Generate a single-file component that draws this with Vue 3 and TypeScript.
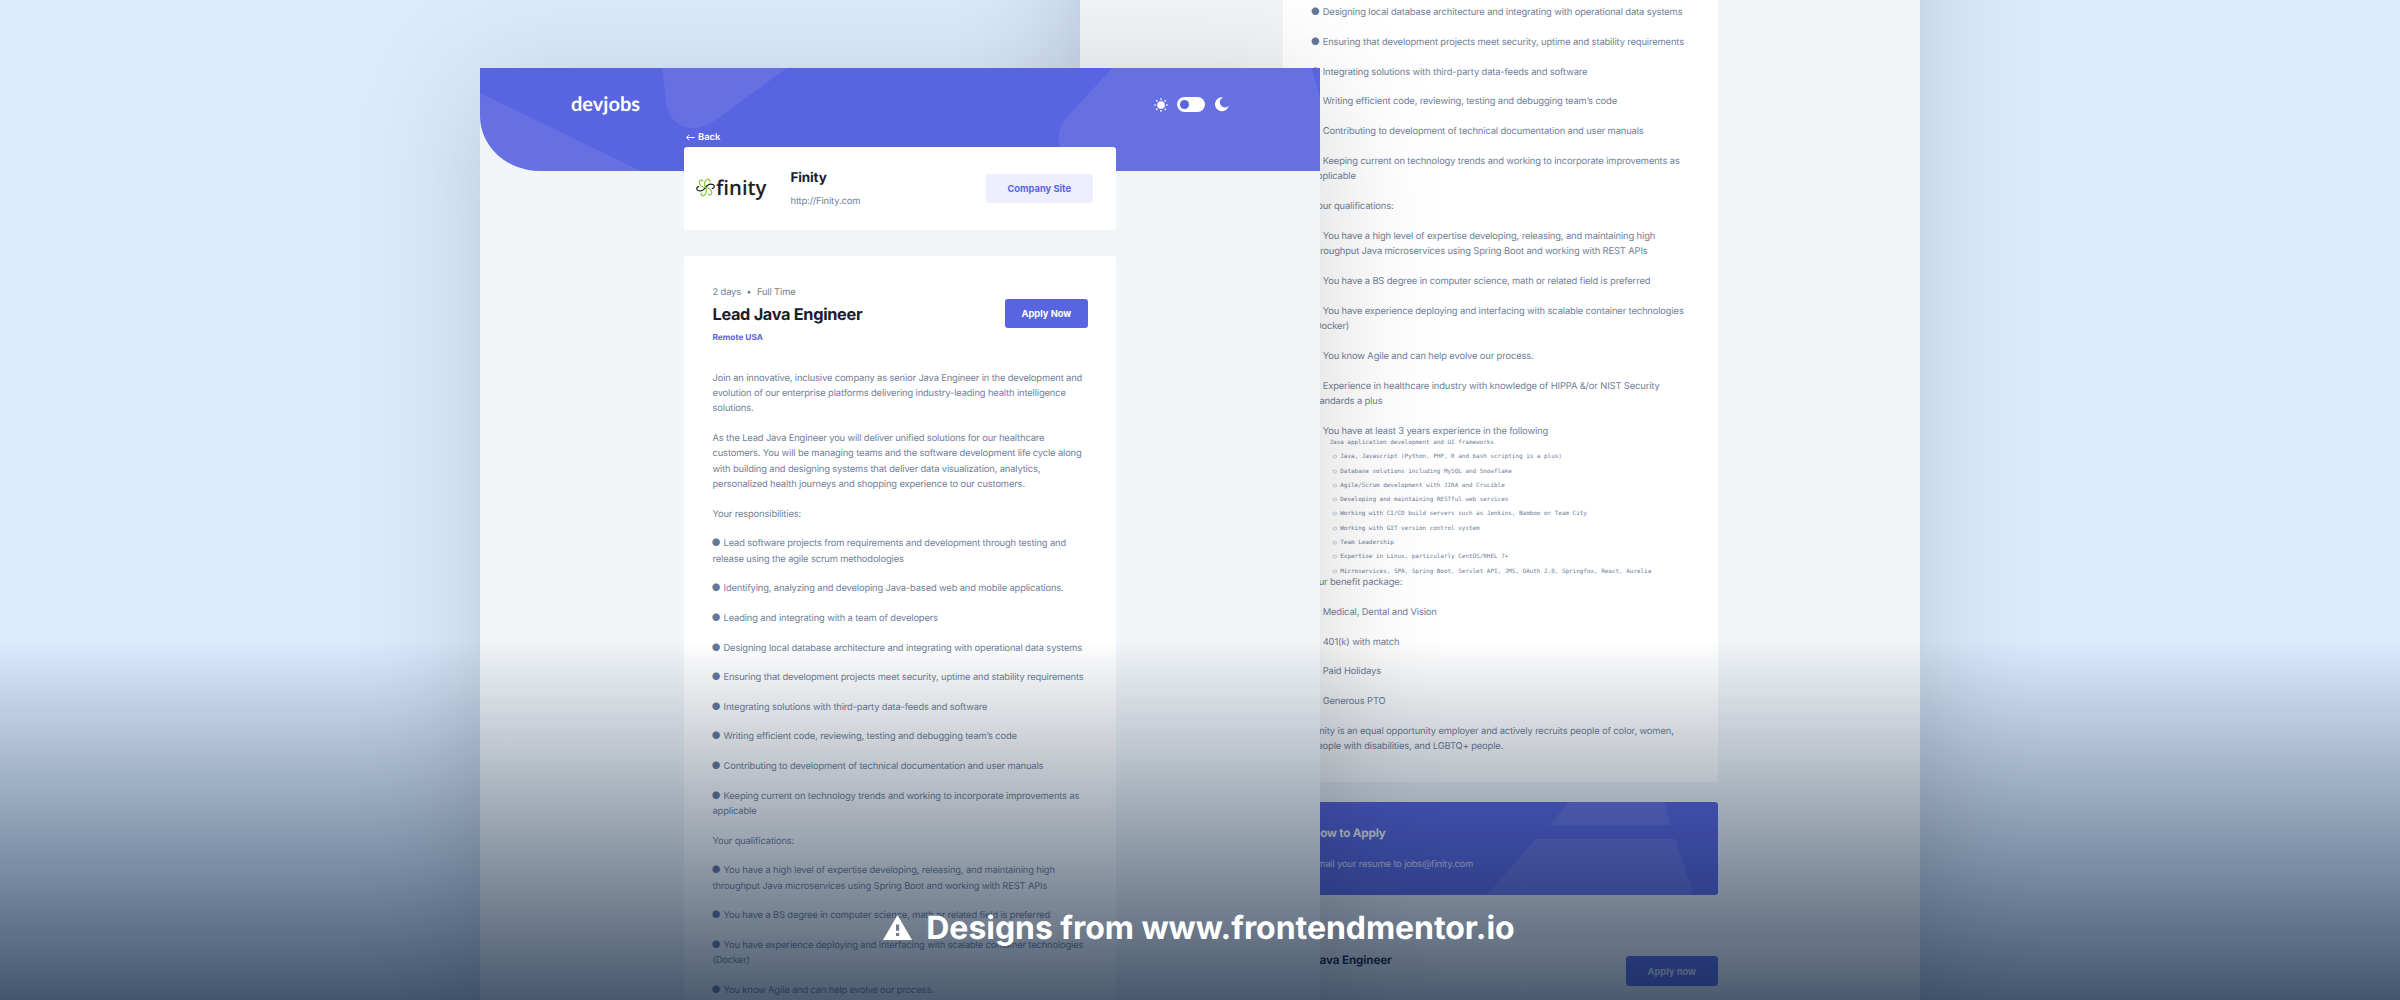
<script setup lang="ts">
interface Para {
  bullet?: boolean
  lines: string[]
}

const intro: Para[] = [
  {
    lines: [
      'Join an innovative, inclusive company as senior Java Engineer in the development and',
      'evolution of our enterprise platforms delivering industry-leading health intelligence',
      'solutions.',
    ],
  },
  {
    lines: [
      'As the Lead Java Engineer you will deliver unified solutions for our healthcare',
      'customers. You will be managing teams and the software development life cycle along',
      'with building and designing systems that deliver data visualization, analytics,',
      'personalized health journeys and shopping experience to our customers.',
    ],
  },
  { lines: ['Your responsibilities:'] },
  {
    bullet: true,
    lines: [
      'Lead software projects from requirements and development through testing and',
      'release using the agile scrum methodologies',
    ],
  },
  { bullet: true, lines: ['Identifying, analyzing and developing Java-based web and mobile applications.'] },
  { bullet: true, lines: ['Leading and integrating with a team of developers'] },
]

const shared: Para[] = [
  { bullet: true, lines: ['Designing local database architecture and integrating with operational data systems'] },
  { bullet: true, lines: ['Ensuring that development projects meet security, uptime and stability requirements'] },
  { bullet: true, lines: ['Integrating solutions with third-party data-feeds and software'] },
  { bullet: true, lines: ['Writing efficient code, reviewing, testing and debugging team’s code'] },
  { bullet: true, lines: ['Contributing to development of technical documentation and user manuals'] },
  {
    bullet: true,
    lines: ['Keeping current on technology trends and working to incorporate improvements as', 'applicable'],
  },
  { lines: ['Your qualifications:'] },
  {
    bullet: true,
    lines: [
      'You have a high level of expertise developing, releasing, and maintaining high',
      'throughput Java microservices using Spring Boot and working with REST APIs',
    ],
  },
  { bullet: true, lines: ['You have a BS degree in computer science, math or related field is preferred'] },
  {
    bullet: true,
    lines: ['You have experience deploying and interfacing with scalable container technologies', '(Docker)'],
  },
  { bullet: true, lines: ['You know Agile and can help evolve our process.'] },
]

const frontParas: Para[] = [...intro, ...shared]

const backParas: Para[] = [
  ...shared,
  {
    bullet: true,
    lines: ['Experience in healthcare industry with knowledge of HIPPA &/or NIST Security', 'standards a plus'],
  },
  { bullet: true, lines: ['You have at least 3 years experience in the following'] },
]

const skills: string[] = [
  'Java, Javascript (Python, PHP, R and bash scripting is a plus)',
  'Database solutions including MySQL and Snowflake',
  'Agile/Scrum development with JIRA and Crucible',
  'Developing and maintaining RESTful web services',
  'Working with CI/CD build servers such as Jenkins, Bamboo or Team City',
  'Working with GIT version control system',
  'Team Leadership',
  'Expertise in Linux, particularly CentOS/RHEL 7+',
  'Microservices, SPA, Spring Boot, Servlet API, JMS, OAuth 2.0, Springfox, React, Aurelia',
]

const benefits: Para[] = [
  { lines: ['Our benefit package:'] },
  { bullet: true, lines: ['Medical, Dental and Vision'] },
  { bullet: true, lines: ['401(k) with match'] },
  { bullet: true, lines: ['Paid Holidays'] },
  { bullet: true, lines: ['Generous PTO'] },
  {
    lines: [
      'Finity is an equal opportunity employer and actively recruits people of color, women,',
      'people with disabilities, and LGBTQ+ people.',
    ],
  },
]

const petals = [0, 60, 120, 180, 240, 300]
const rays = [0, 45, 90, 135, 180, 225, 270, 315]
</script>

<template>
  <main class="stage">
    <section class="window back">
      <article class="sheet">
        <div v-for="(p, i) in backParas" :key="i" class="para">
          <div v-for="(l, j) in p.lines" :key="j" class="line">
            <span v-if="p.bullet && j === 0" class="dot">●</span>{{ l }}
          </div>
        </div>
        <div class="code">
          <div class="code-head">Java application development and UI frameworks</div>
          <div v-for="s in skills" :key="s" class="code-row"><span class="ring">○</span>{{ s }}</div>
        </div>
        <div v-for="(p, i) in benefits" :key="'b' + i" class="para">
          <div v-for="(l, j) in p.lines" :key="j" class="line">
            <span v-if="p.bullet && j === 0" class="dot">●</span>{{ l }}
          </div>
        </div>
      </article>
      <div class="how">
        <svg class="how-art" viewBox="0 0 434 93" preserveAspectRatio="none">
          <path d="M286 0h95l6 23H266z M252 37h140l18 56H204z" fill="#fff" fill-opacity=".09" />
        </svg>
        <h3>How to Apply</h3>
        <p>Email your resume to jobs@finity.com</p>
      </div>
      <footer class="foot">
        <div class="foot-title">Lead Java Engineer</div>
        <button class="btn foot-btn">Apply now</button>
      </footer>
    </section>

    <section class="window front">
      <header class="head">
        <svg class="head-art" viewBox="0 0 840 103" preserveAspectRatio="none">
          <path
            d="M0 25L161 103H0z M182.5 0C184 14 185 25 186.500 38C190 55 205 63.500 222 59C229 57 234 53 240 49L307 0z M632 0H831.500L840 29V103H592C584 92 577 82 579 66C580 58 583 54 588 48z"
            fill="#fff"
            fill-opacity=".08"
          />
        </svg>
        <div class="logo">devjobs</div>
        <div class="theme">
          <svg class="sun" viewBox="-7 -7 14 14">
            <circle r="3.800" fill="#fff" />
            <path
              v-for="r in rays"
              :key="r"
              d="M0 -5.300V-6.600"
              :transform="`rotate(${r})`"
              stroke="#fff"
              stroke-width="1.100"
              stroke-linecap="round"
            />
          </svg>
          <div class="toggle"><i></i></div>
          <svg class="moon" viewBox="0 0 14.500 14.500">
            <path d="M8.400.35A5.200 5.200 0 1 0 13.800 8.850A7 7 0 1 1 8.400.35z" fill="#fff" />
          </svg>
        </div>
      </header>
      <div class="page">
        <div class="backlink">
          <svg viewBox="0 0 9 7">
            <path d="M8.700 3.500H.7M3.300.8L.6 3.500L3.300 6.200" fill="none" stroke="#fff" stroke-width="1" />
          </svg>
          <span>Back</span>
        </div>
        <div class="company">
          <div class="brand">
            <svg viewBox="-10 -11 20 22">
              <path
                v-for="(a, i) in petals"
                :key="a"
                d="M0 0C-2 -3 -2.500 -6 .5 -8.800C2.500 -9.800 4.300 -8 3.600 -6.500"
                :transform="`rotate(${a + 8})`"
                fill="none"
                :stroke="i === 1 || i === 4 ? '#231f20' : '#8cc63f'"
                stroke-width="1.300"
                stroke-linecap="round"
              />
            </svg>
            <span>finity</span>
          </div>
          <div class="who">
            <strong>Finity</strong>
            <span>http://Finity.com</span>
          </div>
          <button class="btn site">Company Site</button>
        </div>
        <article class="sheet job">
          <div class="job-head">
            <div>
              <div class="meta"><span>2 days</span><b>•</b><span>Full Time</span></div>
              <h1>Lead Java Engineer</h1>
              <div class="place">Remote USA</div>
            </div>
            <button class="btn apply">Apply Now</button>
          </div>
          <div v-for="(p, i) in frontParas" :key="i" class="para">
            <div v-for="(l, j) in p.lines" :key="j" class="line">
              <span v-if="p.bullet && j === 0" class="dot">●</span>{{ l }}
            </div>
          </div>
        </article>
      </div>
    </section>

    <div class="shade">
      <div class="caption">
        <svg viewBox="0 0 29 25">
          <path
            fill-rule="evenodd"
            d="M14.500 0L29 25H0z M13 9.500v6.300h3.200V9.500z M13 18v3h3.200v-3z"
            fill="#fff"
          />
        </svg>
        <span>Designs from www.frontendmentor.io</span>
      </div>
    </div>
  </main>
</template>

<style>
body {
  background: #dbebfe;
}
</style>

<style scoped>
.stage,
.stage * {
  box-sizing: border-box;
}
.stage {
  position: relative;
  width: 2400px;
  height: 1000px;
  overflow: hidden;
  background: #dbebfe;
  font-family: Inter, 'Liberation Sans', sans-serif;
  color: #6e8098;
  text-rendering: geometricPrecision;
}
h1,
h3,
p {
  margin: 0;
}
.window {
  position: absolute;
  width: 840px;
  background: #f1f5f8;
  box-shadow: 0 20px 115px rgba(0, 0, 0, 0.17);
}
.back {
  left: 1080px;
  top: -200px;
  height: 1400px;
  padding: 200px 202.5px 0 203px;
}
.front {
  left: 480px;
  top: 68px;
  height: 1100px;
}
.sheet {
  background: #fff;
  border-radius: 3px;
  font-size: 9.33px;
  line-height: 15.4px;
  letter-spacing: -0.13px;
}
.back .sheet {
  height: 982.3px;
  margin-top: -200px;
  padding: 205.200px 0 0 28.700px;
  font-size: 9.37px;
  line-height: 15.45px;
}
.para {
  margin-bottom: 14.2px;
}
.back .para {
  margin-bottom: 14.320px;
}
.line {
  white-space: nowrap;
}
.dot {
  display: inline-block;
  width: 12px;
  margin-left: -1px;
  font-size: 10px;
  line-height: 0;
  letter-spacing: 0;
  color: #64789a;
}
.code {
  margin-top: -17.900px;
  padding-left: 17.800px;
  font: 5.950px/14.280px 'DejaVu Sans Mono', monospace;
  letter-spacing: 0;
  white-space: nowrap;
  margin-bottom: -3.700px;
}
.code-row {
  padding-left: 3.600px;
}
.ring {
  display: inline-block;
  width: 7.200px;
}
.how {
  position: relative;
  height: 93px;
  margin-top: 20px;
  padding: 23px 28.700px 0;
  border-radius: 3px;
  overflow: hidden;
  background: #5964e0;
  color: #fff;
}
.how-art {
  position: absolute;
  inset: 0;
  width: 100%;
  height: 100%;
}
.how h3 {
  font-size: 11.700px;
  line-height: 16px;
  letter-spacing: -0.200px;
}
.how p {
  margin-top: 16px;
  font-size: 9.370px;
  line-height: 16px;
  letter-spacing: -0.140px;
  opacity: 0.8;
}
.foot {
  display: flex;
  justify-content: space-between;
  margin: 43.700px -202.500px 0 -203px;
  padding: 17.500px 202.500px 0 203px;
  height: 300px;
  background: #fbfcfd;
}
.foot-title {
  color: #19202d;
  font-weight: 700;
  font-size: 11.700px;
  line-height: 16px;
  letter-spacing: -0.150px;
  margin-top: -4px;
}
.btn {
  height: 29.300px;
  padding: 0;
  border: 0;
  border-radius: 3px;
  background: #5964e0;
  color: #fff;
  font: 700 9.330px Inter, sans-serif;
}
.foot-btn {
  width: 91.500px;
  color: #e6e8fb;
}
.head {
  position: relative;
  display: flex;
  justify-content: space-between;
  align-items: flex-start;
  height: 103px;
  padding: 24px 91px 0 91px;
  background: #5964e0;
  border-bottom-left-radius: 60px 55px;
  overflow: hidden;
}
.head-art {
  position: absolute;
  inset: 0;
  width: 100%;
  height: 100%;
}
.logo {
  position: relative;
  font: 700 20px/24px Lato, sans-serif;
  color: #fff;
}
.theme {
  position: relative;
  display: flex;
  align-items: center;
  gap: 9.500px;
  margin-top: 5px;
}
.sun {
  width: 14px;
  height: 14px;
}
.moon {
  width: 14.500px;
  height: 14.500px;
}
.toggle {
  width: 28px;
  height: 15px;
  border-radius: 8px;
  background: #fff;
  padding: 3px;
}
.toggle i {
  display: block;
  width: 9px;
  height: 9px;
  border-radius: 50%;
  background: #5964e0;
}
.page {
  position: relative;
  width: 432.400px;
  margin: -42px 0 0 204px;
}
.backlink {
  display: flex;
  align-items: center;
  gap: 3.500px;
  height: 16px;
  padding-left: 1.500px;
  color: #fff;
  font-size: 9.330px;
  font-weight: 600;
}
.backlink svg {
  width: 9px;
  height: 7px;
}
.company {
  display: flex;
  align-items: flex-start;
  height: 83px;
  margin-top: 2px;
  background: #fff;
  border-radius: 3px;
}
.brand {
  display: flex;
  align-items: center;
  width: 106.500px;
  padding: 28px 0 0 12px;
  color: #231f20;
  font: 600 20.300px/24px 'Open Sans', sans-serif;
}
.brand svg {
  width: 19px;
  height: 21px;
  margin-right: 1px;
}
.who {
  display: flex;
  flex-direction: column;
  padding-top: 23px;
  font-size: 9.330px;
  line-height: 16px;
  letter-spacing: -0.130px;
}
.who strong {
  margin-bottom: 8px;
  color: #19202d;
  font-size: 13.500px;
}
.site {
  width: 107px;
  margin: 27px 23.700px 0 auto;
  background: #eeeffc;
  color: #5964e0;
}
.job {
  height: 900px;
  margin-top: 26px;
  padding: 28px 28.500px 0;
}
.job-head {
  display: flex;
  justify-content: space-between;
  height: 86.600px;
}
.meta {
  display: flex;
  gap: 5.800px;
  line-height: 18px;
}
.job h1 {
  margin-top: 1px;
  color: #19202d;
  font-size: 16.300px;
  line-height: 22px;
  letter-spacing: -0.300px;
}
.place {
  margin-top: 6px;
  color: #5964e0;
  font-size: 8.300px;
  font-weight: 700;
  letter-spacing: 0;
}
.apply {
  width: 83px;
  margin-top: 15px;
}
.shade {
  position: absolute;
  inset: 640px 0 0;
  display: flex;
  justify-content: center;
  align-items: flex-start;
  padding-top: 263px;
  background: linear-gradient(rgba(10, 31, 58, 0), rgba(10, 31, 58, 0.73));
}
.caption {
  display: flex;
  align-items: center;
  gap: 14px;
  margin-left: -2px;
  height: 48px;
  color: #fff;
  font-size: 32px;
  font-weight: 700;
  letter-spacing: -0.050px;
  white-space: nowrap;
}
.caption svg {
  width: 29px;
  height: 25px;
}
</style>
